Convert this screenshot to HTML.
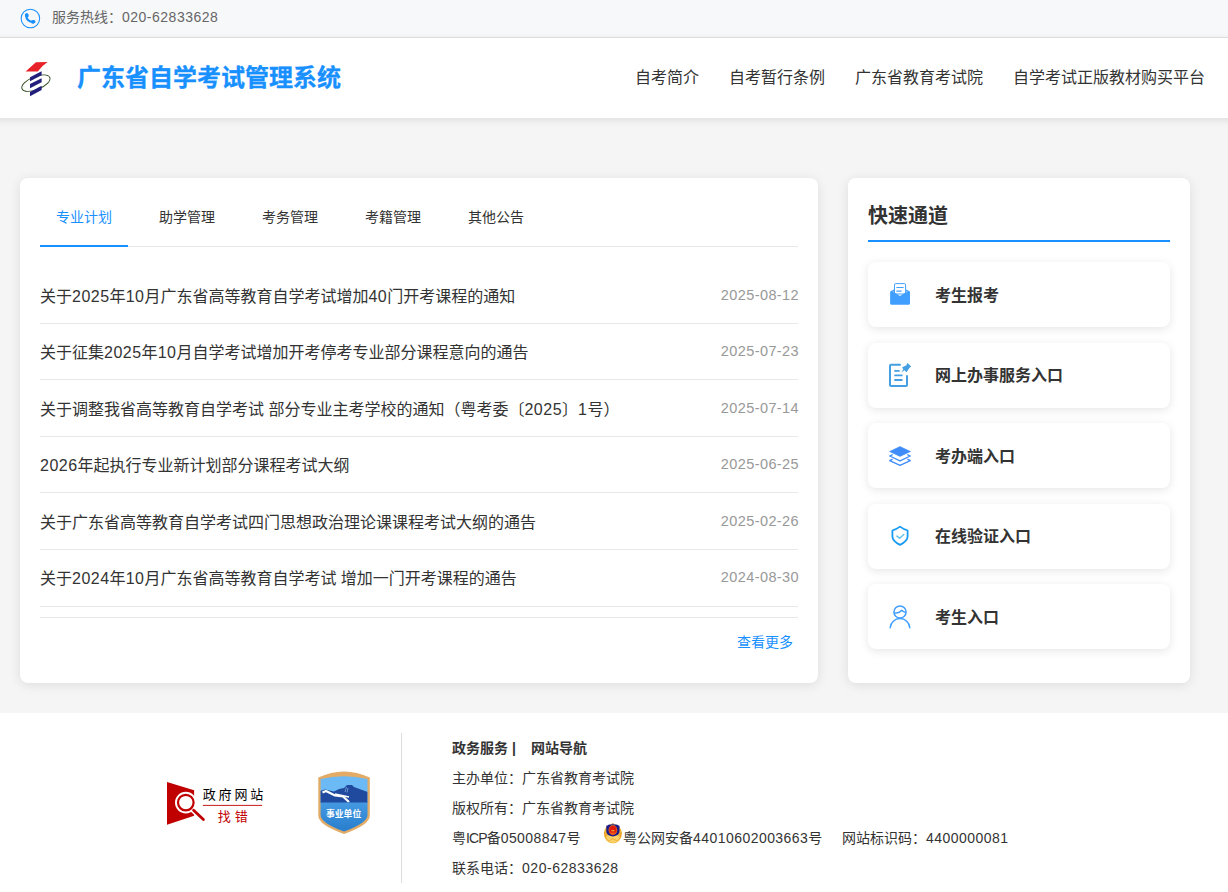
<!DOCTYPE html>
<html lang="zh-CN">
<head>
<meta charset="utf-8">
<title>广东省自学考试管理系统</title>
<style>
*{box-sizing:border-box;margin:0;padding:0}
html,body{width:1228px;height:892px;overflow:hidden}
body{background:#f5f5f5;font-family:"Liberation Sans","Noto Sans CJK SC",sans-serif;color:#333;position:relative}
.n{letter-spacing:.5px}
/* top bar */
.topbar{position:absolute;left:0;top:0;width:1228px;height:38px;background:#f7f8fa;border-bottom:1px solid #e4e4e4}
.topbar .ph{position:absolute;left:15px;top:3px;width:30px;height:30px}
.topbar .txt{position:absolute;left:52px;top:0;height:35px;line-height:35px;font-size:14px;color:#666;white-space:nowrap}
/* header */
.header{position:absolute;left:-20px;top:38px;width:1268px;padding:0;height:80px;background:#fff;box-shadow:0 2px 8px rgba(0,0,0,.1)}
.header .logo{position:absolute;left:35px;top:18px;width:42px;height:46px}
.header h1{position:absolute;left:97px;top:20px;height:40px;line-height:40px;font-size:24px;font-weight:700;color:#1890ff;white-space:nowrap;-webkit-text-stroke:.3px #1890ff}
.header .nav{position:absolute;right:43px;top:20px;height:40px;line-height:40px;font-size:16px;color:#333;white-space:nowrap}
.header .nav a{margin-left:30px;color:#333;text-decoration:none;display:inline-block}
/* cards */
.card{position:absolute;background:#fff;border-radius:8px;box-shadow:0 2px 12px rgba(0,0,0,.1)}
.left{left:20px;top:178px;width:798px;height:505px}
.right{left:848px;top:178px;width:342px;height:505px}
.tabs{position:absolute;left:20px;top:10px;width:758px;height:59px;border-bottom:1px solid #e8e8e8}
.tab{position:absolute;top:0;height:58px;line-height:58px;font-size:14px;color:#333;padding:0 16px;white-space:nowrap}
.tab.on{color:#1890ff}
.tab.on:after{content:"";position:absolute;left:0;right:0;bottom:-1px;height:2px;background:#1890ff}
.list{position:absolute;left:20px;top:89px;width:758px}
.row{position:relative;height:56.6px;border-bottom:1px solid #e8e8e8}
.row .t{position:absolute;left:0;top:17.5px;font-size:16px;line-height:24px;color:#333;white-space:nowrap}
.row .d{position:absolute;right:-1px;top:15.5px;font-size:14.5px;letter-spacing:.4px;line-height:24px;color:#999;white-space:nowrap}
.moreline{position:absolute;left:20px;top:439px;width:758px;height:1px;background:#e8e8e8}
.more{position:absolute;right:25px;top:452px;font-size:14px;line-height:24px;color:#1890ff}
/* quick */
.qt{position:absolute;left:20px;top:23px;font-size:20px;font-weight:700;line-height:30px;color:#333}
.qline{position:absolute;left:20px;top:62px;width:302px;height:2px;background:#1890ff}
.q{position:absolute;left:20px;width:302px;height:65px;background:#fff;border-radius:8px;box-shadow:0 2px 10px rgba(0,0,0,.1)}
.q svg{position:absolute;left:12px;top:13px;width:40px;height:40px}
.q .lb{position:absolute;left:67px;top:19.5px;font-size:16px;font-weight:700;line-height:28px;color:#333;white-space:nowrap}
/* footer */
.footer{position:absolute;left:0;top:713px;width:1228px;height:179px;background:#fff}
.footer .vline{position:absolute;left:401px;top:20px;width:1px;height:150px;background:#ddd}
.footer .ln{position:absolute;font-size:14px;line-height:30px;height:30px;color:#333;white-space:nowrap}
.footer .ln.b{font-weight:700}
.footer .gov{position:absolute;left:155px;top:52px;width:120px;height:80px}
.footer .sy{position:absolute;left:305px;top:47px;width:80px;height:85px}
.footer .pol{position:absolute;left:595px;top:102px;width:40px;height:40px}
.m{letter-spacing:.45px}
</style>
</head>
<body>
<div class="topbar">
  <svg class="ph" viewBox="0 0 30 30"><circle cx="15.4" cy="15.5" r="9.25" fill="none" stroke="#1890ff" stroke-width="1.05"/><path d="M11.4 12.2 Q11.4 19 18.6 18.9" fill="none" stroke="#1890ff" stroke-width="2.3" stroke-linecap="round"/><ellipse cx="11.8" cy="12.3" rx="1.9" ry="2.2" fill="#1890ff" transform="rotate(-20 11.8 12.3)"/><ellipse cx="18.3" cy="18.8" rx="2.2" ry="1.8" fill="#1890ff" transform="rotate(-20 18.3 18.8)"/></svg>
  <div class="txt">服务热线：<span class="n">020-62833628</span></div>
</div>
<div class="header">
  <svg class="logo" viewBox="0 0 42 46"><ellipse cx="20.9" cy="27.1" rx="15" ry="6.5" transform="rotate(-22 20.9 27.1)" fill="none" stroke="#2a4418" stroke-width=".9"/><path d="M20.9 6.2L32.6 6.1Q27.5 9.5 22.7 15.5L10.6 15.5Z" fill="#e8222a"/><polygon points="15,21.2 26.6,15.2 26.6,19.3 15,25.3" fill="#221f7c"/><polygon points="15,27.9 26.6,22.2 26.6,26.3 15,32.2" fill="#221f7c"/><polygon points="15,35.9 26.6,29.7 26.6,34.1 15,40.2" fill="#221f7c"/></svg>
  <h1>广东省自学考试管理系统</h1>
  <div class="nav"><a>自考简介</a><a>自考暂行条例</a><a>广东省教育考试院</a><a>自学考试正版教材购买平台</a></div>
</div>

<div class="card left">
  <div class="tabs">
    <div class="tab on" style="left:0">专业计划</div>
    <div class="tab" style="left:103px">助学管理</div>
    <div class="tab" style="left:206px">考务管理</div>
    <div class="tab" style="left:309px">考籍管理</div>
    <div class="tab" style="left:412px">其他公告</div>
  </div>
  <div class="list">
    <div class="row"><span class="t">关于<span class="n">2025</span>年<span class="n">10</span>月广东省高等教育自学考试增加<span class="n">40</span>门开考课程的通知</span><span class="d n">2025-08-12</span></div>
    <div class="row"><span class="t">关于征集<span class="n">2025</span>年<span class="n">10</span>月自学考试增加开考停考专业部分课程意向的通告</span><span class="d n">2025-07-23</span></div>
    <div class="row"><span class="t">关于调整我省高等教育自学考试 部分专业主考学校的通知（粤考委〔<span class="n">2025</span>〕<span class="n">1</span>号）</span><span class="d n">2025-07-14</span></div>
    <div class="row"><span class="t"><span class="n">2026</span>年起执行专业新计划部分课程考试大纲</span><span class="d n">2025-06-25</span></div>
    <div class="row"><span class="t">关于广东省高等教育自学考试四门思想政治理论课课程考试大纲的通告</span><span class="d n">2025-02-26</span></div>
    <div class="row"><span class="t">关于<span class="n">2024</span>年<span class="n">10</span>月广东省高等教育自学考试 增加一门开考课程的通告</span><span class="d n">2024-08-30</span></div>
  </div>
  <div class="moreline"></div>
  <div class="more">查看更多</div>
</div>

<div class="card right">
  <div class="qt">快速通道</div>
  <div class="qline"></div>
  <div class="q" style="top:84px"><svg viewBox="0 0 40 40"><path d="M14.5 19V9.8Q14.5 8.6 15.7 8.6H24.4Q25.6 8.6 25.6 9.8V19Z" fill="#fff" stroke="#409eff" stroke-width="1"/><path d="M16.8 12.5H23.2M16.8 16.1H21.2" stroke="#409eff" stroke-width="1.1" stroke-linecap="round"/><path d="M10.1 17.4Q10.1 16.4 11 16L14 14.6V17.3L20 20.9L26.1 17.3V14.6L29.1 16Q30 16.4 30 17.4V28.3Q30 29.8 28.5 29.8H11.6Q10.1 29.8 10.1 28.3Z" fill="#409eff"/><path d="M12.3 16.7L13.9 16V17.6ZM27.8 16.7L26.2 16V17.6Z" fill="#a6d1ff"/></svg><div class="lb">考生报考</div></div>
  <div class="q" style="top:164.5px"><svg viewBox="0 0 40 40" style="top:12.5px"><path d="M20 9.7H11Q10 9.7 10 10.7V29.9Q10 30.9 11 30.9H26Q27 30.9 27 29.9V20.9" fill="none" stroke="#45a0e3" stroke-width="2" stroke-linecap="round"/><path d="M15 15.9H18.9M15 20.4H21.8M15 25H21.8" stroke="#45a0e3" stroke-width="1.8" stroke-linecap="round"/><polygon points="27.6,8.1 31.2,11.4 29.6,12.8 26.5,17.3 24.4,15.2 21.3,17.6 23.3,14.3 22,12.6 26.9,10.1 26.5,9.2" fill="#45a0e3"/></svg><div class="lb">网上办事服务入口</div></div>
  <div class="q" style="top:245px"><svg viewBox="0 0 40 40"><polygon points="9.6,15.5 20,10.6 30.5,15.5 20,20.4" fill="#3f8cf8" stroke="#3f8cf8" stroke-width=".6" stroke-linejoin="round"/><path d="M12.2 18.8L9.7 20L20 24.8L30.3 20L27.8 18.8" fill="none" stroke="#3f8cf8" stroke-width="1.3" stroke-linejoin="round" stroke-linecap="round"/><path d="M12.2 23.4L9.7 24.6L20 29.4L30.3 24.6L27.8 23.4" fill="none" stroke="#3f8cf8" stroke-width="1.3" stroke-linejoin="round" stroke-linecap="round"/></svg><div class="lb">考办端入口</div></div>
  <div class="q" style="top:325.5px"><svg viewBox="0 0 40 40" style="top:12.5px"><path d="M20 10.6Q23.5 13.2 27.6 14.5V20.5Q27.6 25 20 28.9Q12.4 25 12.4 20.5V14.5Q16.5 13.2 20 10.6Z" fill="none" stroke="#1a9bf2" stroke-width="1.8" stroke-linejoin="round"/><path d="M16.9 20.1L19.6 22.2L23.8 18.5" fill="none" stroke="#62c3f0" stroke-width="1.5" stroke-linecap="round" stroke-linejoin="round"/></svg><div class="lb">在线验证入口</div></div>
  <div class="q" style="top:406px"><svg viewBox="0 0 40 40"><circle cx="20" cy="15" r="6.1" fill="none" stroke="#409eff" stroke-width="1.5"/><path d="M14.3 15.8Q19 16.8 21.8 13.3Q23.5 15 25.7 15.6" fill="none" stroke="#409eff" stroke-width="1.4" stroke-linejoin="round"/><path d="M10.18 30.7A9.85 9.85 0 0 1 29.82 30.7" fill="none" stroke="#409eff" stroke-width="1.5" stroke-linecap="round"/></svg><div class="lb">考生入口</div></div>
</div>

<div class="footer">
  <svg class="gov" viewBox="0 0 120 80">
    <polygon points="12,17.1 39.1,25.2 39.1,50.8 12,59.8" fill="#c00000"/>
    <path d="M37.6 44.5L46 52.4" stroke="#fff" stroke-width="5.6" stroke-linecap="round"/>
    <circle cx="30.8" cy="37.6" r="10.8" fill="#fff"/>
    <circle cx="30.8" cy="37.6" r="7.8" fill="#fff" stroke="#c00000" stroke-width="2.2"/>
    <path d="M38.6 45.2L48.4 54.6" stroke="#c00000" stroke-width="2.8" stroke-linecap="round"/>
    <text x="47.8" y="33.7" font-family="'Liberation Sans','Noto Sans CJK SC',sans-serif" font-size="13" letter-spacing="2.8" fill="#000">政府网站</text>
    <rect x="47.9" y="39.9" width="59.2" height=".9" fill="#c00000"/>
    <text x="62.7" y="55.6" font-family="'Liberation Sans','Noto Sans CJK SC',sans-serif" font-size="13" letter-spacing="4" fill="#c00000">找错</text>
  </svg>
  <svg class="sy" viewBox="0 0 80 85">
    <defs><clipPath id="shc"><path d="M15.6 19Q39 13.6 62.5 19V55Q62.5 63 39 71.6Q15.6 63 15.6 55Z"/></clipPath>
    <linearGradient id="lg" x1="0" y1="0" x2="0" y2="1"><stop offset="0" stop-color="#4499e2"/><stop offset="1" stop-color="#2278c8"/></linearGradient></defs>
    <path d="M13.3 17.6Q39 5.4 64.8 17.6V55.5Q64.8 65 39 73.9Q13.3 65 13.3 55.5Z" fill="#e2ab66"/>
    <g clip-path="url(#shc)">
      <rect x="10" y="10" width="60" height="33" fill="#6bbaf6"/>
      <polygon points="15,31 20,29.5 29,31.5 34,29 39,28 42,25 47,25 49,27 62.7,32 62.7,43 15,43" fill="#1f4a9d"/>
      <path d="M17.5 32.5L21 31L30 35.5L38 36.5L44 42" fill="none" stroke="#fff" stroke-width="2.2" stroke-linejoin="round"/>
      <path d="M30 34L44 37" stroke="#fff" stroke-width="1.3"/>
      <path d="M41.5 27L40 32M43 28L42 32.5" stroke="#9cc4ee" stroke-width=".6"/>
      <rect x="10" y="42.5" width="60" height="35" fill="url(#lg)"/>
    </g>
    <text x="38.6" y="56.8" text-anchor="middle" font-family="'Liberation Sans','Noto Sans CJK SC',sans-serif" font-size="8.8" font-weight="700" fill="#fff">事业单位</text>
  </svg>
  <div class="vline"></div>
  <div class="ln b" style="top:20px;left:452px">政务服务 |</div>
  <div class="ln b" style="top:20px;left:531px">网站导航</div>
  <div class="ln" style="top:50px;left:452px">主办单位：广东省教育考试院</div>
  <div class="ln" style="top:80px;left:452px">版权所有：广东省教育考试院</div>
  <div class="ln" style="top:110px;left:452px">粤<span style="letter-spacing:-.9px">ICP</span>备<span class="m">05008847</span>号</div>
  <svg class="pol" viewBox="0 0 40 40">
    <ellipse cx="17.9" cy="18.6" rx="9" ry="9.6" fill="#f1b33a"/>
    <ellipse cx="17.9" cy="23.6" rx="7.4" ry="4.2" fill="#f8d266"/>
    <path d="M9.6 17Q9.4 23 13 25.6M26.2 17Q26.4 23 22.8 25.6" fill="none" stroke="#e99a20" stroke-width=".8"/>
    <circle cx="17.9" cy="8.9" r="1" fill="#c79a62"/>
    <path d="M11.3 10.8Q12.6 10.6 13.4 9.7Q17.9 8.9 22.4 9.7Q23.2 10.6 24.5 10.8V16.4Q24.5 20.2 17.9 21.4Q11.3 20.2 11.3 16.4Z" fill="#1a1a8a"/>
    <ellipse cx="17.9" cy="15.1" rx="4.3" ry="4.9" fill="#f39a1c"/>
    <ellipse cx="17.9" cy="15.1" rx="3.8" ry="4.4" fill="#e01b0c"/>
    <path d="M14.4 17.4H21.4Q20.4 19.4 17.9 19.5Q15.4 19.4 14.4 17.4Z" fill="#f0561a"/>
    <rect x="16.3" y="15.3" width="3.2" height=".9" rx=".3" fill="#f6c23c"/>
    <path d="M13 26.4L17.9 23.6L22.8 26.4" fill="none" stroke="#eda52c" stroke-width=".8"/>
  </svg>
  <div class="ln" style="top:110px;left:623px">粤公网安备<span class="m">44010602003663</span>号</div>
  <div class="ln" style="top:110px;left:842px">网站标识码：<span class="m">4400000081</span></div>
  <div class="ln" style="top:140px;left:452px">联系电话：<span style="letter-spacing:.53px">020-62833628</span></div>
</div>
</body>
</html>
